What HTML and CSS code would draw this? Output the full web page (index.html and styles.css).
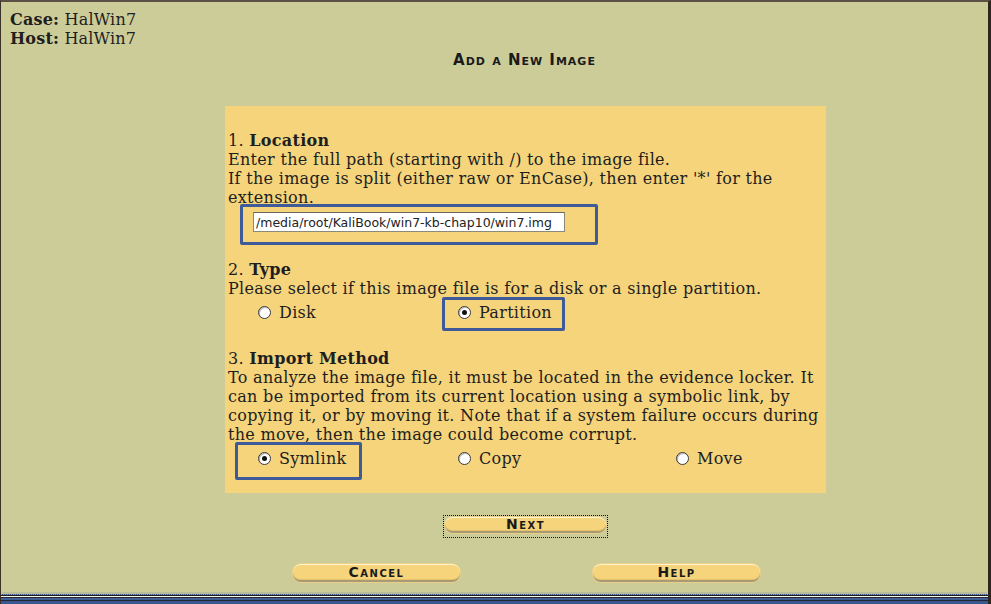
FILE: index.html
```html
<!DOCTYPE html>
<html>
<head>
<meta charset="utf-8">
<link rel="stylesheet" href="styles.css">
</head>
<body>
<div class="frame">
  <div class="meta">
    <div><b>Case:</b> HalWin7</div>
    <div><b>Host:</b> HalWin7</div>
  </div>
  <h1 class="title">Add a New Image</h1>
  <div class="panel">
    <div class="section">
      <div class="head">1. <b>Location</b></div>
      <div class="desc">Enter the full path (starting with /) to the image file.<br>If the image is split (either raw or EnCase), then enter '*' for the<br>extension.</div>
      <div class="pathrow">
        <span class="hl hl-path"><input class="path" type="text" value="/media/root/KaliBook/win7-kb-chap10/win7.img"></span>
      </div>
    </div>
    <div class="section">
      <div class="head">2. <b>Type</b></div>
      <div class="desc">Please select if this image file is for a disk or a single partition.</div>
      <div class="opts two">
        <label class="opt"><span class="radio"></span>Disk</label>
        <label class="opt hl hl-part"><span class="radio on"></span>Partition</label>
      </div>
    </div>
    <div class="section s3">
      <div class="head">3. <b>Import Method</b></div>
      <div class="desc">To analyze the image file, it must be located in the evidence locker. It<br>can be imported from its current location using a symbolic link, by<br>copying it, or by moving it. Note that if a system failure occurs during<br>the move, then the image could become corrupt.</div>
      <div class="opts three">
        <label class="opt hl hl-sym"><span class="radio on"></span>Symlink</label>
        <label class="opt"><span class="radio"></span>Copy</label>
        <label class="opt"><span class="radio"></span>Move</label>
      </div>
    </div>
  </div>
  <div class="nextrow">
    <span class="focus"><span class="btn btn-next">Next</span></span>
  </div>
  <div class="btnrow">
    <span class="btn">Cancel</span>
    <span class="btn">Help</span>
  </div>
  <div class="spacer"></div>
  <div class="bottom"></div>
</div>
</body>
</html>
```

FILE: styles.css
```css
html, body {
  margin: 0;
  padding: 0;
  background: #cccc99;
}
.frame {
  width: 991px;
  height: 604px;
  box-sizing: border-box;
  border-top: 2px solid #5a5045;
  border-left: 1px solid #3a3028;
  border-right: 3px solid #2e261e;
  background: #cccc99;
  display: flex;
  flex-direction: column;
  font-family: "DejaVu Serif", serif;
  color: #1e1e1e;
  overflow: hidden;
}
.meta {
  padding: 8px 0 0 9px;
  font-size: 16px;
  line-height: 19px;
  letter-spacing: 0.2px;
}
.title {
  margin: 3px 0 0 0;
  height: 18px;
  text-align: center;
  font-family: "DejaVu Sans", sans-serif;
  font-variant: small-caps;
  font-weight: bold;
  font-size: 15px;
  line-height: 18px;
  letter-spacing: 1px;
  padding-left: 60px;
  color: #1a1a1a;
}
.panel {
  margin: 37px 0 0 224px;
  width: 601px;
  height: 387px;
  box-sizing: border-box;
  background: #f5d47c;
  padding: 25px 0 0 3px;
  font-size: 16px;
  line-height: 19px;
  letter-spacing: 0.3px;
  white-space: nowrap;
}
.pathrow {
  height: 53px;
  padding-left: 12px;
}
.hl {
  position: relative;
}
.hl::after {
  content: "";
  position: absolute;
  border: 3px solid #3d5b98;
  border-radius: 2px;
  pointer-events: none;
}
.hl-path {
  display: inline-block;
  margin-top: -3px;
  padding: 8px 33px 13px 13px;
}
.hl-path::after { left: 0; top: 0; right: 0; bottom: 0; }
.path {
  width: 312px;
  height: 20px;
  box-sizing: border-box;
  border: 1px solid #8a8a7a;
  border-top-color: #6a6a60;
  background: #fff;
  font-family: "DejaVu Sans", sans-serif;
  font-size: 12.5px;
  letter-spacing: 0;
  padding: 0 2px;
  margin: 0;
  color: #222;
  display: block;
}
.opts {
  display: grid;
  padding-top: 5px;
  height: 19px;
  align-items: center;
}
.opts.two {
  grid-template-columns: 200px 200px;
  padding-left: 30px;
  margin-bottom: 27px;
}
.opts.three {
  grid-template-columns: 200px 218px 120px;
  padding-left: 30px;
}
.opt {
  display: flex;
  align-items: center;
  gap: 8px;
  width: max-content;
  height: 19px;
}
.radio {
  width: 11px;
  height: 11px;
  border: 1px solid #3a3a3a;
  border-radius: 50%;
  background: #fff;
  box-shadow: inset 1px 1px 0 #b8b8b8;
  box-sizing: content-box;
  position: relative;
}
.radio.on::after {
  content: "";
  position: absolute;
  left: 3px;
  top: 3px;
  width: 5px;
  height: 5px;
  border-radius: 50%;
  background: #111;
}
.hl-part::after { left: -16px; top: -6px; right: -13px; bottom: -9px; }
.hl-sym::after { left: -23px; top: -7px; right: -15px; bottom: -12px; }
.nextrow {
  margin-top: 22px;
  padding-left: 442px;
  height: 20px;
}
.focus {
  display: inline-block;
  border: 1px dotted #111;
  padding: 1px;
}
.btn {
  display: inline-block;
  width: 161px;
  height: 16px;
  box-sizing: border-box;
  border-radius: 8px;
  background: #f5d47c;
  border-top: 1px solid #fff4cc;
  border-bottom: 2px solid #a89a74;
  box-shadow: inset 0 -1px 0 #e6c26a, 0 0 0 1px #e8cf8a;
  text-align: center;
  font-family: "DejaVu Sans", sans-serif;
  font-variant: small-caps;
  font-weight: bold;
  font-size: 14px;
  line-height: 12px;
  letter-spacing: 1.5px;
  color: #1a1a1a;
  vertical-align: top;
}
.btnrow {
  margin-top: 29px;
  display: flex;
  gap: 133px;
  padding-left: 292px;
}
.btnrow .btn {
  width: 167px;
  height: 18px;
  line-height: 15px;
}
.spacer { flex: 1; }
.bottom {
  height: 9px;
  border-top: 1px dotted #9a9888;
  box-shadow: 0 -3px 0 -1px #bdbc98;
  background: linear-gradient(#1e1e1e 0 1px, #f2f2f2 1px 2px, #2a2a2a 2px 3px, #3f5d96 3px 5px, #22252e 5px 6px, #3a5890 6px 100%);
}
```
